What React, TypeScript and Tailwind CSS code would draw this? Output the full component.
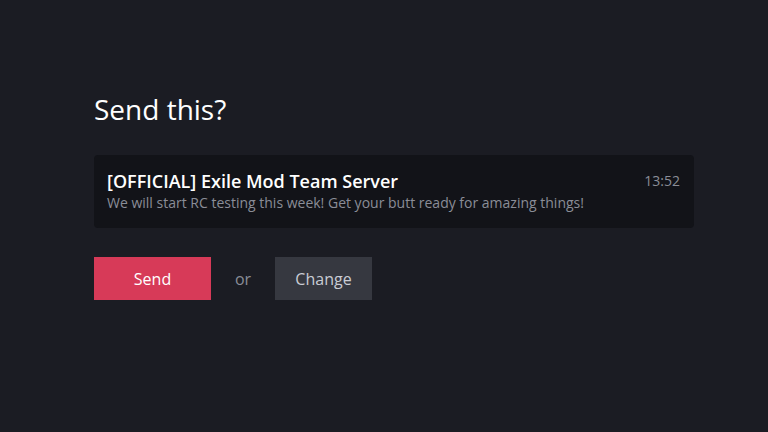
import React from 'react';

const App = () => {
  return (
    <div className="w-[768px] h-[432px] bg-[#1b1c23] font-['Open_Sans',sans-serif] px-[94px] pt-[90px]">
      <h1 className="text-[28px] leading-[38px] text-white">Send this?</h1>

      <div className="mt-[27px] w-[600px] h-[73px] bg-[#121318] rounded-sm flex justify-between pl-[13px] pr-[14px] pt-[14px]">
        <div>
          <div className="text-[18px] leading-[24px] font-semibold text-white">[OFFICIAL] Exile Mod Team Server</div>
          <div className="text-[14px] leading-[20px] text-[#8a8d97]">
            We will start RC testing this week! Get your butt ready for amazing things!
          </div>
        </div>
        <div className="text-[14px] leading-[24px] text-[#8a8d97]">13:52</div>
      </div>

      <div className="mt-[29px] flex items-center">
        <button className="w-[117px] h-[43px] bg-[#d73a58] text-white text-[16px]">Send</button>
        <span className="w-[64px] text-center text-[16px] text-[#8a8d97]">or</span>
        <button className="w-[97px] h-[43px] bg-[#363840] text-[#c9ccd4] text-[16px]">Change</button>
      </div>
    </div>
  );
};

export default App;
